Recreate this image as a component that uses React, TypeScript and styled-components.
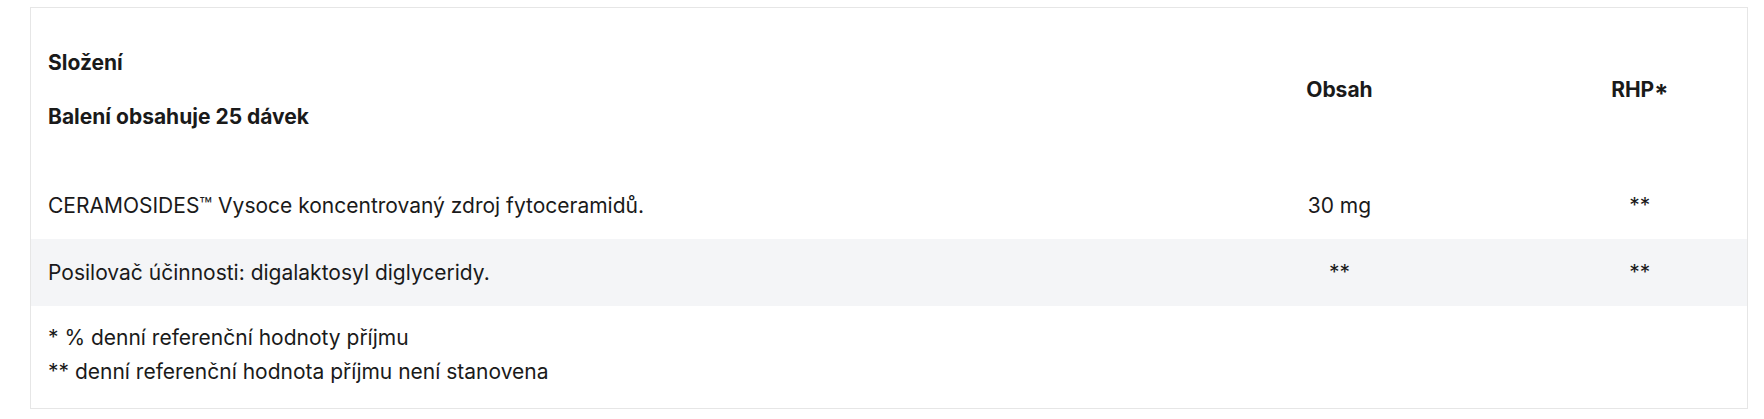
import React from "react";
import styled, { createGlobalStyle } from "styled-components";

const GlobalStyle = createGlobalStyle`
  html, body {
    margin: 0;
    padding: 0;
    background: #ffffff;
  }
  body {
    font-family: Inter, "Noto Sans", "Liberation Sans", sans-serif;
    color: #1a1a1a;
  }
`;

const Page = styled.div`
  padding: 7px 16px 11px 30px;
`;

const Card = styled.div`
  border: 1px solid #e6e6e6;
`;

const Table = styled.table`
  width: 100%;
  border-collapse: collapse;
  table-layout: fixed;
  font-size: 21px;
`;

const HeadCell = styled.th<{ $align?: "left" | "center" }>`
  text-align: ${(p) => p.$align ?? "center"};
  vertical-align: middle;
  font-weight: 700;
  padding: 19px 17px;
  line-height: 36px;
  font-feature-settings: "case";
`;

const Title = styled.p`
  margin: 18px 0;
`;

const Row = styled.tr<{ $striped?: boolean }>`
  background: ${(p) => (p.$striped ? "#f4f5f7" : "transparent")};
`;

const Cell = styled.td<{ $align?: "left" | "center" }>`
  text-align: ${(p) => p.$align ?? "center"};
  vertical-align: middle;
  padding: 20px 17px;
  line-height: 27px;
  font-weight: 400;
`;

const Footnotes = styled.td`
  padding: 15px 17px 19px;
  line-height: 34px;
`;

const Note = styled.div``;

const items = [
  { name: "CERAMOSIDES™ Vysoce koncentrovaný zdroj fytoceramidů.", amount: "30 mg", rhp: "**" },
  { name: "Posilovač účinnosti: digalaktosyl diglyceridy.", amount: "**", rhp: "**" },
];

export default function App() {
  return (
    <>
      <GlobalStyle />
      <Page>
        <Card>
          <Table>
            <colgroup>
              <col style={{ width: "65%" }} />
              <col style={{ width: "22.5%" }} />
              <col style={{ width: "12.5%" }} />
            </colgroup>
            <thead>
              <tr>
                <HeadCell $align="left">
                  <Title>Složení</Title>
                  <Title>Balení obsahuje 25 dávek</Title>
                </HeadCell>
                <HeadCell>Obsah</HeadCell>
                <HeadCell>RHP*</HeadCell>
              </tr>
            </thead>
            <tbody>
              {items.map((it, i) => (
                <Row key={it.name} $striped={i % 2 === 1}>
                  <Cell $align="left">{it.name}</Cell>
                  <Cell>{it.amount}</Cell>
                  <Cell>{it.rhp}</Cell>
                </Row>
              ))}
              <tr>
                <Footnotes colSpan={3}>
                  <Note>* % denní referenční hodnoty příjmu</Note>
                  <Note>** denní referenční hodnota příjmu není stanovena</Note>
                </Footnotes>
              </tr>
            </tbody>
          </Table>
        </Card>
      </Page>
    </>
  );
}
